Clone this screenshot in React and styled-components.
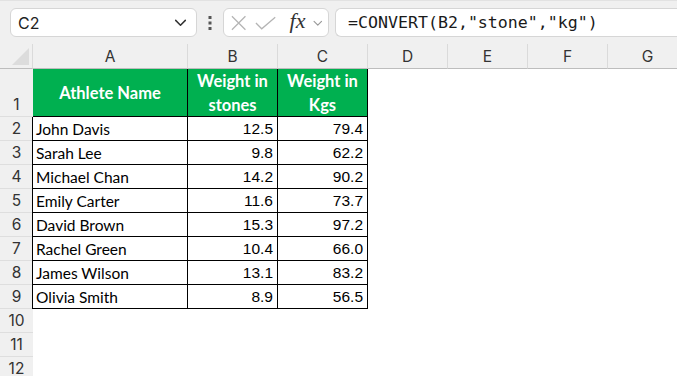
import React from 'react'
import styled, { createGlobalStyle } from 'styled-components'

const Global = createGlobalStyle`
  html, body { margin: 0; padding: 0; background: #fff; overflow: hidden; }
  body { font-family: "Lato", "Liberation Sans", sans-serif; }
`

const Page = styled.div`
  width: 677px;
  height: 376px;
  overflow: hidden;
  background: #fff;
`

const FormulaBar = styled.div`
  height: 44px;
  background: #f0f0f0;
  border-top: 1px solid #e2e2e2;
  box-sizing: border-box;
  display: flex;
  align-items: flex-start;
  padding: 7px 0 0 10px;
`

const Box = styled.div`
  background: #fff;
  border: 1px solid #d6d6d6;
  border-radius: 6px;
  height: 29px;
  box-sizing: border-box;
  display: flex;
  align-items: center;
`

const NameBox = styled(Box)`
  width: 187px;
  padding: 0 8px 0 7px;
  justify-content: space-between;
  font-family: "Inter", "Liberation Sans", sans-serif;
  font-size: 16px;
  color: #222;
`

const Dots = styled.div`
  width: 26px;
  height: 29px;
  display: flex;
  align-items: center;
  justify-content: center;
`

const FnBox = styled(Box)`
  width: 106px;
  padding: 0 4px 0 6px;
  gap: 7px;
`

const Fx = styled.span`
  font-family: "Liberation Serif", serif;
  font-style: italic;
  font-size: 22px;
  color: #333;
  margin-left: 5px;
  margin-top: -3px;
`

const FormulaInput = styled(Box)`
  margin-left: 6px;
  flex: 1;
  border-right: none;
  border-radius: 6px 0 0 6px;
  padding-left: 12px;
  font-family: "DejaVu Sans Mono", "Liberation Mono", monospace;
  font-size: 16.6px;
  color: #1a1a1a;
`

const Grid = styled.div`
  display: grid;
  grid-template-columns: 33px 155px 90px 90px 80px 80px 80px 80px;
  grid-template-rows: 25px 48px repeat(11, 24px);
`

const Corner = styled.div`
  background: #f0f0f0;
  border-bottom: 1px solid #bdbdbd;
  border-right: 1px solid #dadada;
  position: relative;
`

const Tri = styled.div`
  position: absolute;
  right: 3px;
  bottom: 3px;
  width: 0;
  height: 0;
  border-left: 17px solid transparent;
  border-bottom: 17px solid #dcdcdc;
`

const ColHead = styled.div`
  background: #f0f0f0;
  border-bottom: 1px solid #bdbdbd;
  border-right: 1px solid #dadada;
  display: flex;
  align-items: center;
  justify-content: center;
  font-family: "Inter", "Liberation Sans", sans-serif;
  font-size: 15.5px;
  color: #333;
`

const RowHead = styled.div`
  background: #f0f0f0;
  border-bottom: 1px solid #dedede;
  display: flex;
  align-items: flex-end;
  justify-content: center;
  padding-bottom: 2px;
  box-sizing: border-box;
  font-family: "Inter", "Liberation Sans", sans-serif;
  font-size: 15.5px;
  color: #333;
`

const Head = styled.div`
  background: #00b050;
  color: #fff;
  font-weight: 700;
  font-size: 16.5px;
  line-height: 24px;
  text-align: center;
  display: flex;
  align-items: center;
  justify-content: center;
  border-right: 1px solid #000;
  border-bottom: 1px solid #000;
  box-sizing: border-box;
`

const Cell = styled.div`
  border-right: 1px solid #000;
  border-bottom: 1px solid #000;
  border-left: ${p => (p.$first ? '1px solid #000' : 'none')};
  margin-left: ${p => (p.$first ? '-1px' : '0')};
  box-sizing: border-box;
  display: flex;
  align-items: center;
  justify-content: ${p => (p.$num ? 'flex-end' : 'flex-start')};
  padding: 1px 4px 0 3px;
  font-family: ${p => (p.$num ? '"Liberation Sans", sans-serif' : '"Lato", sans-serif')};
  font-size: 15.5px;
  color: #000;
`

const Empty = styled.div``

const rows = [
  ['John Davis', '12.5', '79.4'],
  ['Sarah Lee', '9.8', '62.2'],
  ['Michael Chan', '14.2', '90.2'],
  ['Emily Carter', '11.6', '73.7'],
  ['David Brown', '15.3', '97.2'],
  ['Rachel Green', '10.4', '66.0'],
  ['James Wilson', '13.1', '83.2'],
  ['Olivia Smith', '8.9', '56.5'],
]

const Chevron = ({ size = 14, color = '#444' }) => (
  <svg width={size} height={size} viewBox="0 0 14 14" fill="none">
    <path d="M2.5 5 L7 9.5 L11.5 5" stroke={color} strokeWidth="1.4" strokeLinecap="round" strokeLinejoin="round" />
  </svg>
)

export default function App() {
  return (
    <Page>
      <Global />
      <FormulaBar>
        <NameBox>
          <span>C2</span>
          <Chevron size={15} color="#333" />
        </NameBox>
        <Dots>
          <svg width="4" height="16" viewBox="0 0 4 16">
            <rect x="0.5" y="1" width="3" height="3" fill="#555" />
            <rect x="0.5" y="6.5" width="3" height="3" fill="#555" />
            <rect x="0.5" y="12" width="3" height="3" fill="#555" />
          </svg>
        </Dots>
        <FnBox>
          <svg width="18" height="18" viewBox="0 0 18 18">
            <path d="M2 2 L16 16 M16 2 L2 16" stroke="#b4b4b4" strokeWidth="1.3" />
          </svg>
          <svg width="24" height="18" viewBox="0 0 24 18">
            <path d="M2 9 L8 15 L22 3" stroke="#b4b4b4" strokeWidth="1.3" fill="none" />
          </svg>
          <Fx>fx</Fx>
          <Chevron size={12} color="#999" />
        </FnBox>
        <FormulaInput>=CONVERT(B2,"stone","kg")</FormulaInput>
      </FormulaBar>
      <Grid>
        <Corner><Tri /></Corner>
        {['A', 'B', 'C', 'D', 'E', 'F', 'G'].map(c => (
          <ColHead key={c}>{c}</ColHead>
        ))}

        <RowHead>1</RowHead>
        <Head>Athlete Name</Head>
        <Head>Weight in<br />stones</Head>
        <Head>Weight in<br />Kgs</Head>
        <Empty /><Empty /><Empty /><Empty />

        {rows.map((r, i) => (
          <React.Fragment key={r[0]}>
            <RowHead>{i + 2}</RowHead>
            <Cell $first>{r[0]}</Cell>
            <Cell $num>{r[1]}</Cell>
            <Cell $num>{r[2]}</Cell>
            <Empty /><Empty /><Empty /><Empty />
          </React.Fragment>
        ))}

        {[10, 11, 12].map(n => (
          <React.Fragment key={n}>
            <RowHead>{n}</RowHead>
            <Empty /><Empty /><Empty /><Empty /><Empty /><Empty /><Empty />
          </React.Fragment>
        ))}
      </Grid>
    </Page>
  )
}
